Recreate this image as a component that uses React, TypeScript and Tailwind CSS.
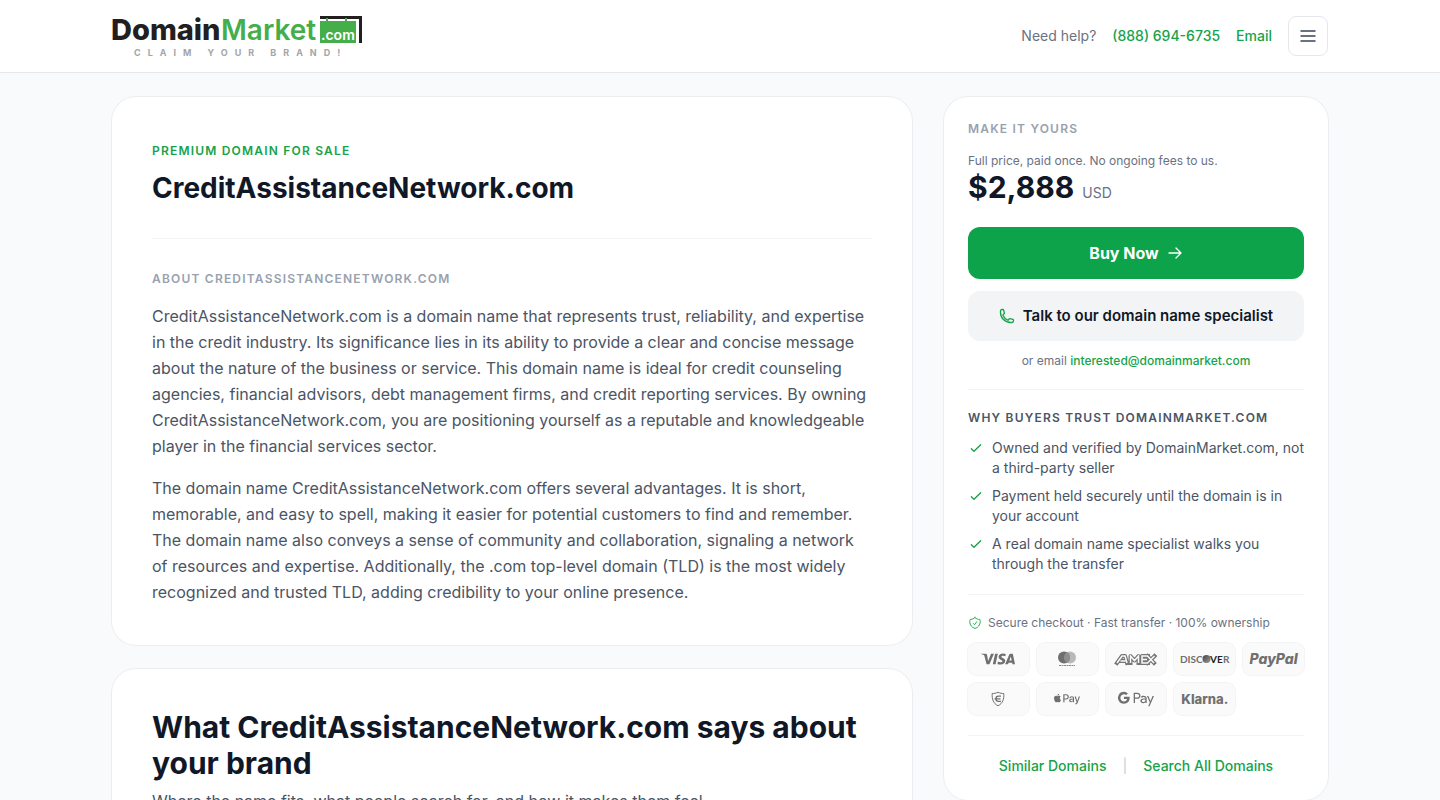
import type { ReactNode } from 'react'
import { FaApplePay } from 'react-icons/fa6'
import { HiOutlineCheck } from 'react-icons/hi'
import { HiOutlineArrowRight, HiOutlinePhone, HiOutlineShieldCheck } from 'react-icons/hi2'
import { SiGooglepay, SiVisa } from 'react-icons/si'

const DOMAIN = 'CreditAssistanceNetwork.com'

const aboutParagraphs = [
  'CreditAssistanceNetwork.com is a domain name that represents trust, reliability, and expertise in the credit industry. Its significance lies in its ability to provide a clear and concise message about the nature of the business or service. This domain name is ideal for credit counseling agencies, financial advisors, debt management firms, and credit reporting services. By owning CreditAssistanceNetwork.com, you are positioning yourself as a reputable and knowledgeable player in the financial services sector.',
  'The domain name CreditAssistanceNetwork.com offers several advantages. It is short, memorable, and easy to spell, making it easier for potential customers to find and remember. The domain name also conveys a sense of community and collaboration, signaling a network of resources and expertise. Additionally, the .com top-level domain (TLD) is the most widely recognized and trusted TLD, adding credibility to your online presence.',
]

const trustPoints = [
  'Owned and verified by DomainMarket.com, not a third-party seller',
  'Payment held securely until the domain is in your account',
  'A real domain name specialist walks you through the transfer',
]

const Logo = () => (
  <svg
    width="252"
    height="44"
    viewBox="0 0 252 44"
    role="img"
    aria-label="DomainMarket.com"
    className="overflow-visible font-['Inter',sans-serif]"
  >
    <text x="-1" y="26" fontSize="29" fontWeight="800" fill="#231f20">
      Domain
    </text>
    <text x="109" y="26" fontSize="28" fontWeight="600" fill="#45ae4a">
      Market
    </text>
    <path d="M208 2h42v27h-3V5h-39z" fill="#231f20" />
    <path d="M208 7h6V4h2v3h17V4h2v3h9v22h-36z" fill="#45ae4a" />
    <text x="209" y="26" fontSize="14" fontWeight="600" fill="#fff">
      .com
    </text>
    <text x="22" y="42" fontSize="9" fontWeight="700" letterSpacing="7" fill="#a3a5a8">
      CLAIM YOUR BRAND!
    </text>
  </svg>
)

const MenuIcon = () => (
  <svg width="20" height="20" viewBox="0 0 20 20" stroke="currentColor" strokeWidth="2" aria-hidden="true">
    <path d="M2.500 5h15M2.500 10h15M2.500 15h15" />
  </svg>
)

const Mastercard = () => (
  <svg width="20" height="16" viewBox="0 0 20 16" aria-label="Mastercard">
    <circle cx="13" cy="6.5" r="6" fill="#b9b9b9" />
    <circle cx="7" cy="6.5" r="6" fill="#6f6f6f" />
    <path d="M10 1.3a6 6 0 0 1 0 10.400a6 6 0 0 1 0-10.400z" fill="#8f8f8f" />
    <path d="M2 14.5h16" stroke="#8a8a8a" strokeDasharray="2 .5" />
  </svg>
)

const AMEX_STROKES =
  'M4 12 9 5h3l2 7M7.500 10h5M17.500 12V5l4 4.500L25.500 5v7M35 5h-6v7h6M29 8.500h5M34.500 5l6.500 7M41.500 5l-7 7'

const Amex = () => (
  <svg width="46" height="16" viewBox="0 0 46 16" fill="none" aria-label="American Express">
    <path d={AMEX_STROKES} stroke="#777" strokeWidth="4" strokeLinecap="square" strokeLinejoin="round" />
    <path d={AMEX_STROKES} stroke="#fafafa" strokeWidth="1.500" />
  </svg>
)

const Discover = () => (
  <svg width="50" height="14" viewBox="0 0 50 14" aria-label="Discover">
    <defs>
      <linearGradient id="disc" x1="0" y1="0" x2="1" y2="1">
        <stop offset="0" stopColor="#444" />
        <stop offset="1" stopColor="#999" />
      </linearGradient>
    </defs>
    <g fontFamily="Lato, sans-serif" fontSize="10" fontWeight="700">
      <text x="0" y="11" fill="#707070">DISC</text>
      <circle cx="26.500" cy="7" r="4" fill="url(#disc)" />
      <text x="30" y="11" fill="#222">VE</text>
      <text x="43" y="11" fill="#707070">R</text>
    </g>
  </svg>
)

const Escrow = () => (
  <svg width="14" height="16" viewBox="0 0 14 16" fill="none" stroke="#707070" aria-label="Escrow">
    <path d="M7 1.200c2 1.100 3.800 1.300 5.800 1.300 .3 5.500-.8 9.700-5.800 12.300C2 12.200 .9 8 1.200 2.500 3.200 2.500 5 2.300 7 1.200z" />
    <path d="M10 5.200H7.500a2.600 2.600 0 0 0 0 5.200H10M3.500 7.800h6" strokeWidth="1.300" />
  </svg>
)

const PayPal = () => (
  <span className="text-sm font-extrabold italic leading-none text-[#707070]">PayPal</span>
)

const Klarna = () => (
  <span className="text-[13px] font-extrabold leading-none text-[#707070]">Klarna.</span>
)

const paymentMethods: { name: string; mark: ReactNode }[] = [
  { name: 'Visa', mark: <SiVisa className="size-[34px]" /> },
  { name: 'Mastercard', mark: <Mastercard /> },
  { name: 'American Express', mark: <Amex /> },
  { name: 'Discover', mark: <Discover /> },
  { name: 'PayPal', mark: <PayPal /> },
  { name: 'Escrow', mark: <Escrow /> },
  { name: 'Apple Pay', mark: <FaApplePay className="size-[26px]" /> },
  { name: 'Google Pay', mark: <SiGooglepay className="size-9" /> },
  { name: 'Klarna', mark: <Klarna /> },
]

const Header = () => (
  <header className="border-b border-gray-200 bg-white">
    <div className="mx-auto flex h-[72px] max-w-7xl items-center justify-between px-8">
      <a href="#home">
        <Logo />
      </a>
      <div className="flex items-center gap-4 text-sm">
        <span className="text-gray-500">Need help?</span>
        <a href="tel:8886946735" className="font-medium text-[#16a34a]">(888) 694-6735</a>
        <a href="mailto:interested@domainmarket.com" className="font-medium text-[#16a34a]">Email</a>
        <button
          type="button"
          aria-label="Open menu"
          className="flex size-10 items-center justify-center rounded-lg border border-gray-200 text-gray-500"
        >
          <MenuIcon />
        </button>
      </div>
    </div>
  </header>
)

const AboutCard = () => (
  <section className="rounded-3xl bg-white p-10 ring-1 ring-gray-950/5">
    <div className="flex h-7 items-center">
      <p className="text-xs font-semibold uppercase tracking-widest text-[#16a34a]">Premium domain for sale</p>
    </div>
    <h1 className="mt-1.5 text-[28px] font-bold leading-tight text-gray-900">{DOMAIN}</h1>
    <div className="mt-8 border-t border-gray-100 pt-8">
      <h2 className="text-xs font-semibold uppercase tracking-widest text-gray-400">{`About ${DOMAIN}`}</h2>
      <div className="mt-4 space-y-4 text-base leading-[26px] text-gray-600">
        {aboutParagraphs.map((text) => (
          <p key={text}>{text}</p>
        ))}
      </div>
    </div>
  </section>
)

const BrandCard = () => (
  <section className="rounded-3xl bg-white p-10 ring-1 ring-gray-950/5">
    <h2 className="text-3xl font-bold text-gray-900">{`What ${DOMAIN} says about your brand`}</h2>
    <p className="mt-2 text-base text-gray-600">
      Where the name fits, what people search for, and how it makes them feel.
    </p>
  </section>
)

const PurchaseCard = () => (
  <aside className="rounded-3xl bg-white p-6 ring-1 ring-gray-950/5">
    <h2 className="text-xs font-semibold uppercase tracking-widest text-gray-400">Make it yours</h2>
    <p className="mt-4 text-xs text-gray-500">Full price, paid once. No ongoing fees to us.</p>
    <p className="flex items-baseline gap-2">
      <span className="text-3xl font-bold text-gray-900">$2,888</span>
      <span className="text-sm text-gray-500">USD</span>
    </p>
    <button
      type="button"
      className="mt-[22px] flex h-[52px] w-full items-center justify-center gap-2 rounded-xl bg-[#0ca34a] text-base font-bold text-white"
    >
      Buy Now
      <HiOutlineArrowRight className="size-4 stroke-2" />
    </button>
    <a
      href="tel:8886946735"
      className="mt-3 flex h-[50px] items-center justify-center gap-2 rounded-xl bg-gray-100 text-[15px] font-semibold text-gray-900"
    >
      <HiOutlinePhone className="size-4 stroke-2 text-[#16a34a]" />
      Talk to our domain name specialist
    </a>
    <p className="mt-3 text-center text-xs text-gray-500">
      or email{' '}
      <a href="mailto:interested@domainmarket.com" className="font-medium text-[#16a34a]">
        interested@domainmarket.com
      </a>
    </p>

    <div className="mt-5 border-t border-gray-100 pt-5">
      <h3 className="text-xs font-semibold uppercase tracking-widest text-gray-600">
        Why buyers trust DomainMarket.com
      </h3>
      <ul className="-mr-1 mt-3 space-y-2 text-sm text-gray-600">
        {trustPoints.map((point) => (
          <li key={point} className="flex gap-2">
            <HiOutlineCheck className="mt-0.5 size-4 shrink-0 text-[#16a34a]" />
            {point}
          </li>
        ))}
      </ul>
    </div>

    <div className="mt-5 border-t border-gray-100 pt-5">
      <p className="flex items-center gap-1.5 text-xs text-gray-500">
        <HiOutlineShieldCheck className="size-3.5 text-[#16a34a]" />
        Secure checkout · Fast transfer · 100% ownership
      </p>
      <ul className="mt-3 grid grid-cols-5 gap-2">
        {paymentMethods.map(({ name, mark }) => (
          <li
            key={name}
            title={name}
            className="flex h-8 items-center justify-center rounded-lg bg-[#fafafa] text-[#707070] ring-1 ring-gray-100"
          >
            {mark}
          </li>
        ))}
      </ul>
    </div>

    <div className="mt-5 flex items-center justify-center gap-4 border-t border-gray-100 pt-5 text-sm font-medium text-[#16a34a]">
      <a href="#similar">Similar Domains</a>
      <span className="text-gray-300">|</span>
      <a href="#search">Search All Domains</a>
    </div>
  </aside>
)

export default function App() {
  return (
    <div className="min-h-screen bg-[#f9fafc] font-['Inter',sans-serif]">
      <Header />
      <main className="mx-auto grid max-w-7xl grid-cols-[1fr_384px] items-start gap-8 px-8 py-6">
        <div className="space-y-6">
          <AboutCard />
          <BrandCard />
        </div>
        <PurchaseCard />
      </main>
    </div>
  )
}
